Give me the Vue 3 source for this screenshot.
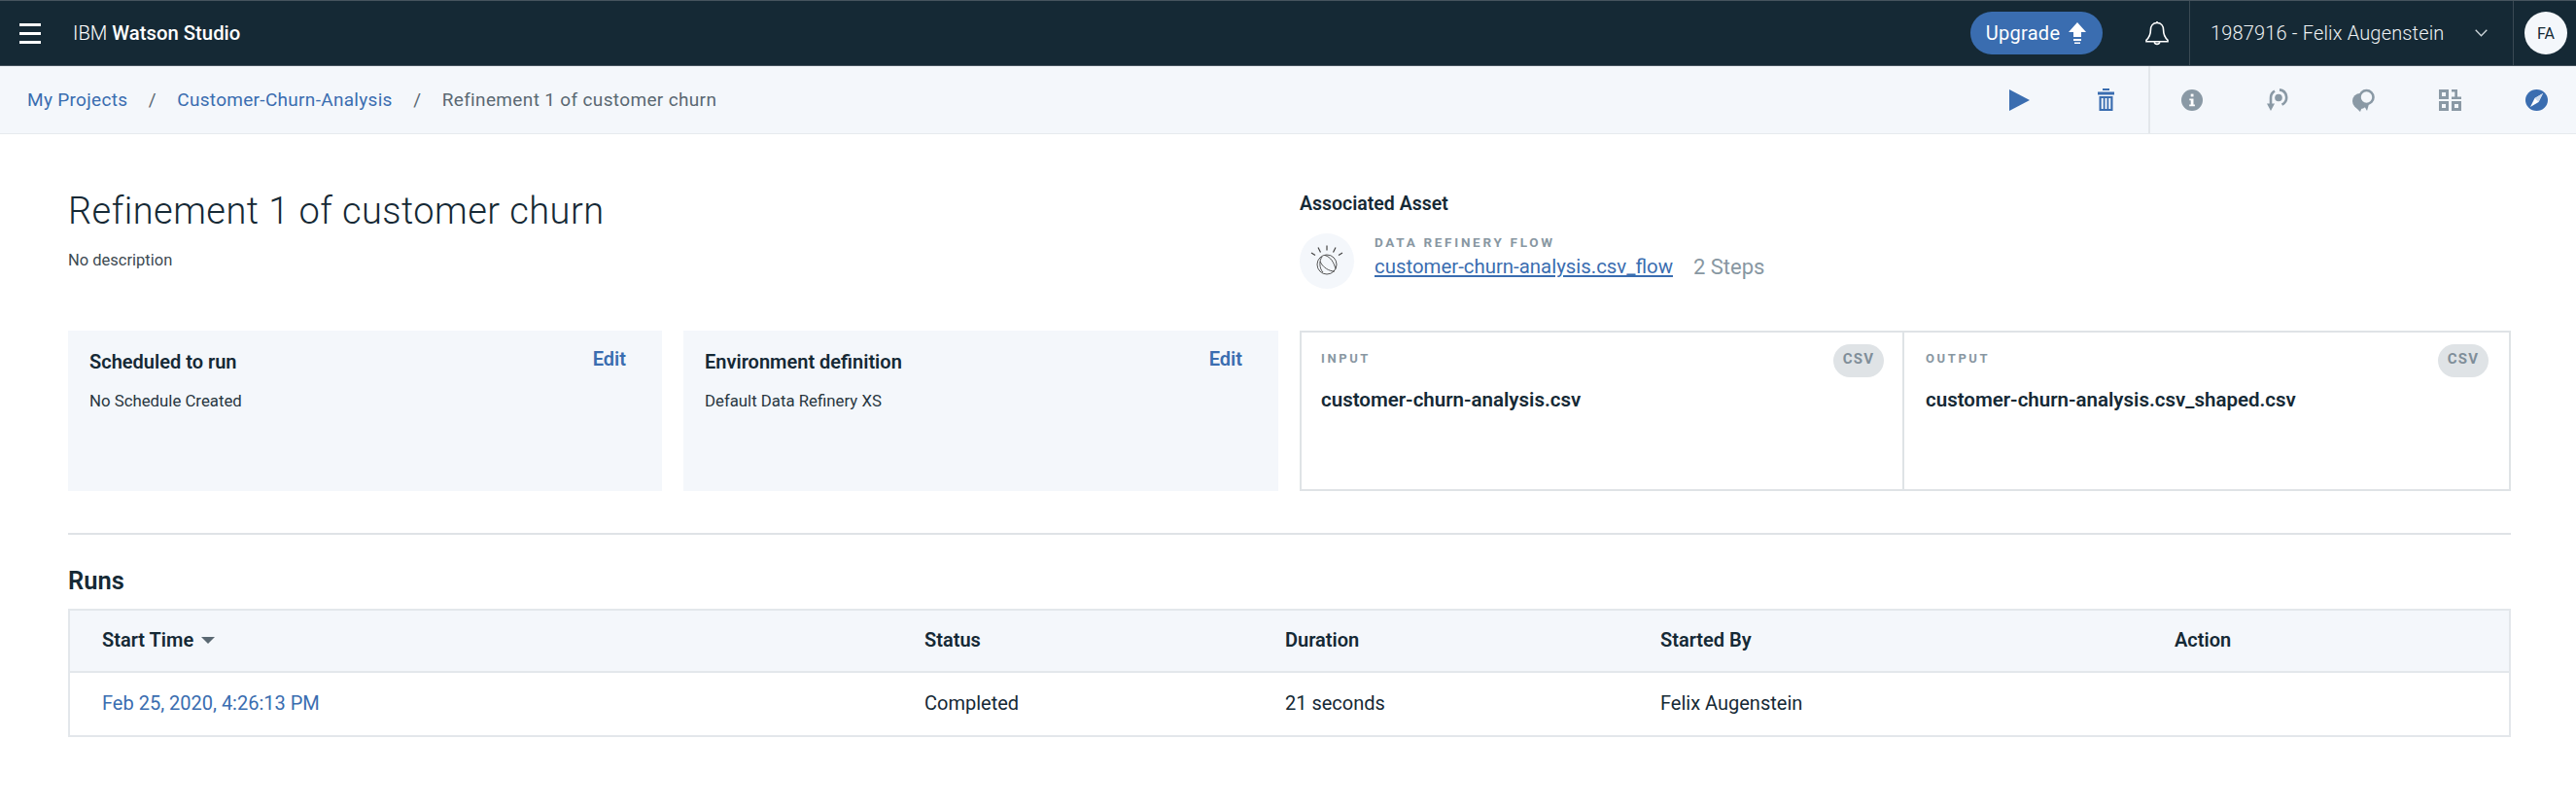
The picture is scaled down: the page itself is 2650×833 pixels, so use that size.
<script setup>
const crumbs = [
  { label: 'My Projects', link: true },
  { label: 'Customer-Churn-Analysis', link: true },
  { label: 'Refinement 1 of customer churn', link: false }
]
const cards = [
  { title: 'Scheduled to run', body: 'No Schedule Created' },
  { title: 'Environment definition', body: 'Default Data Refinery XS' }
]
const files = [
  { label: 'INPUT', name: 'customer-churn-analysis.csv' },
  { label: 'OUTPUT', name: 'customer-churn-analysis.csv_shaped.csv' }
]
const columns = ['Status', 'Duration', 'Started By', 'Action']
</script>

<template>
  <div class="page">
    <header class="topbar">
      <div class="menu"><span></span><span></span><span></span></div>
      <div class="brand">IBM <b>Watson Studio</b></div>
      <div class="top-right">
        <button class="upgrade">Upgrade
          <svg width="20" height="24" viewBox="0 0 20 24"><path d="M10 1 19 11H14V16H6V11H1Z" fill="#fff"/><rect x="6" y="18" width="8" height="2" fill="#fff"/><rect x="7" y="21.5" width="6" height="1.5" fill="#fff"/></svg>
        </button>
        <svg class="bell" width="26" height="27" viewBox="0 0 26 27" fill="none" stroke="#fff" stroke-width="1.6"><path d="M13 2.5c-4.4 0-6.6 3.4-6.6 7.4 0 4.8-1.2 7.2-4.4 10.3v1.6h22v-1.6c-3.2-3.1-4.4-5.5-4.4-10.3 0-4-2.2-7.4-6.6-7.4Z"/><path d="M10.2 22.2a2.9 2.9 0 0 0 5.6 0"/><path d="M13 1v1.5"/></svg>
        <div class="account">
          <span>1987916 - Felix Augenstein</span>
          <svg width="13" height="8" viewBox="0 0 13 8" fill="none" stroke="#cdd5da" stroke-width="1.3"><path d="M.7.8 6.5 6.8 12.3.8"/></svg>
        </div>
        <div class="avatar-wrap"><div class="avatar">FA</div></div>
      </div>
    </header>

    <nav class="subbar">
      <div class="crumbs">
        <template v-for="(c, i) in crumbs" :key="c.label">
          <span v-if="i" class="sep">/</span>
          <span :class="c.link ? 'crumb-link' : 'crumb-current'">{{ c.label }}</span>
        </template>
      </div>
      <div class="actions">
        <svg width="21" height="22" viewBox="0 0 21 22"><path d="M0 0 21 11 0 22Z" fill="#3a6db0"/></svg>
        <svg width="17" height="23" viewBox="0 0 17 23" fill="#3a6db0"><rect x="5" y="0" width="7" height="2"/><rect x="0" y="3.5" width="17" height="3"/><path d="M1.5 8h14v15h-14Zm2.2 2v11h2V10Zm3.8 0v11h2V10Zm3.8 0v11h2V10Z" fill-rule="evenodd"/></svg>
      </div>
      <div class="tools">
        <svg width="22" height="22" viewBox="0 0 22 22"><circle cx="11" cy="11" r="11" fill="#8a99a5"/><rect x="9.7" y="4.6" width="2.8" height="2.8" fill="#fff"/><path d="M8.3 9.4h4.2v6h1.4v1.8H8.2v-1.8h1.5v-4.2H8.3Z" fill="#fff"/></svg>
        <svg width="22" height="24" viewBox="0 0 22 24" fill="none"><path d="M13 1.4a8 8 0 0 1 2.5 15.2" stroke="#8a99a5" stroke-width="2.6"/><path d="M4 17V9.500A8 8 0 0 1 8 2.600" stroke="#8a99a5" stroke-width="2.6"/><circle cx="12" cy="9.5" r="3.8" fill="#8a99a5"/><path d="M0 15.5h8L4 23Z" fill="#8a99a5"/></svg>
        <svg width="23" height="24" viewBox="0 0 23 24"><circle cx="8" cy="13" r="8" fill="#8a99a5"/><path d="M3 19h7l-2 5ZM11 16l6 0-2 7Z" fill="#8a99a5"/><circle cx="14.5" cy="9" r="7" fill="#f4f7fb" stroke="#8a99a5" stroke-width="2.6"/></svg>
        <svg width="23" height="22" viewBox="0 0 23 22" fill="#8a99a5"><path d="M0 0h10v10H0Zm3 3v4h4V3Z" fill-rule="evenodd"/><path d="M13 0h6v7.5h4V10H13V7.5h3.3V2.500H13Z"/><path d="M0 12h10v10H0Zm3 3v4h4v-4Z" fill-rule="evenodd"/><path d="M13 12h10v10H13Zm3 3v4h4v-4Z" fill-rule="evenodd"/></svg>
        <svg width="23" height="22" viewBox="0 0 23 22"><ellipse cx="11.5" cy="11" rx="11.5" ry="11" fill="#3a6db0"/><path d="M18 4 13.5 13 5 18 9.5 9Z" fill="#fff"/><path d="M18 4 9.5 9 13.500 13Z" fill="#cfdcee"/></svg>
      </div>
    </nav>

    <main class="main">
      <section class="hero">
        <div class="hero-left">
          <h1>Refinement 1 of customer churn</h1>
          <p>No description</p>
        </div>
        <div class="hero-right">
          <h3>Associated Asset</h3>
          <div class="asset">
            <div class="asset-icon">
              <svg width="36" height="36" viewBox="0 0 36 36" fill="none" stroke="#444" stroke-width=".9"><circle cx="18" cy="21" r="10"/><path d="M13 13c-3 4-3 12 1 16M11 18c3 6 9 10 15 10M16 11.5c6 2 9 7 11 14"/><path d="M18 1.5v5M9 3.5l2.5 5M27 3.5l-2.5 5M2 9l4 2.5M34 9l-4 2.5" stroke-width="1.2"/></svg>
            </div>
            <div class="asset-text">
              <div class="asset-label">DATA REFINERY FLOW</div>
              <div class="asset-line"><a>customer-churn-analysis.csv_flow</a><span>2 Steps</span></div>
            </div>
          </div>
        </div>
      </section>

      <section class="summary">
        <div v-for="c in cards" :key="c.title" class="card">
          <div class="card-head"><h4>{{ c.title }}</h4><a>Edit</a></div>
          <p>{{ c.body }}</p>
        </div>
        <div class="files">
          <div v-for="f in files" :key="f.label" class="file">
            <div class="file-head"><span class="file-label">{{ f.label }}</span><span class="badge">CSV</span></div>
            <div class="file-name">{{ f.name }}</div>
          </div>
        </div>
      </section>

      <hr class="rule" />

      <h2 class="runs-title">Runs</h2>
      <div class="table">
        <div class="row head">
          <div class="sort">Start Time <i class="caret"></i></div>
          <div v-for="c in columns" :key="c">{{ c }}</div>
        </div>
        <div class="row body">
          <a>Feb 25, 2020, 4:26:13 PM</a>
          <div>Completed</div>
          <div>21 seconds</div>
          <div>Felix Augenstein</div>
          <div></div>
        </div>
      </div>
    </main>
  </div>
</template>

<style>
html, body { background: #fff; }
</style>

<style scoped>
.page { width: 2650px; min-height: 833px; background: #fff; color: #152935; font-family: Roboto, "Noto Sans", sans-serif; overflow: hidden; }
h1, h2, h3, h4, p { margin: 0; }

.topbar { height: 68px; box-sizing: border-box; background: #152935; border-top: 1px solid #46545e; border-bottom: 1px solid #46545e; display: flex; align-items: center; color: #fff; }
.menu { width: 22px; margin-left: 20px; display: flex; flex-direction: column; gap: 6px; }
.menu span { height: 3px; background: #fff; }
.brand { margin-left: 33px; font-size: 20.3px; font-weight: 300; }
.brand b { font-weight: 500; }
.top-right { margin-left: auto; display: flex; align-items: center; height: 100%; }
.upgrade { width: 136px; height: 44px; margin-right: 1px; border: 0; border-radius: 22px; background: #3a6db0; color: #fff; font: 400 20px Roboto, sans-serif; letter-spacing: .3px; display: flex; align-items: center; justify-content: center; gap: 8px; padding: 0; }
.bell { margin-left: 42px; }
.account { margin-left: 20px; height: 100%; width: 334px; box-sizing: border-box; padding-left: 21px; border-left: 1px solid #3a4a54; border-right: 1px solid #3a4a54; display: flex; align-items: center; font-size: 20px; font-weight: 300; letter-spacing: .16px; color: #eef1f3; }
.account svg { margin-left: 31px; }
.avatar-wrap { width: 64px; display: flex; padding-left: 11px; box-sizing: border-box; }
.avatar { width: 44px; height: 44px; border-radius: 50%; background: #f4f7fb; color: #152935; font-size: 16px; display: flex; align-items: center; justify-content: center; }

.subbar { height: 70px; box-sizing: border-box; background: #f4f7fb; border-bottom: 1px solid #e6eaee; display: flex; align-items: center; font-size: 19px; }
.crumbs { margin-left: 28px; display: flex; align-items: center; }
.crumb-link { color: #3a6db0; letter-spacing: .3px; }
.crumb-current { color: #5a6872; letter-spacing: .35px; }
.sep { width: 51px; text-align: center; color: #5a6872; }
.actions { margin-left: auto; width: 143px; height: 100%; display: flex; align-items: center; gap: 70px; }
.tools { height: 100%; width: 440px; box-sizing: border-box; border-left: 2px solid #e3e7eb; display: flex; align-items: center; padding-left: 32px; gap: 66px; }

.main { padding: 0 67px 0 70px; }
.hero { height: 202px; display: flex; }
.hero-left { width: 1267px; padding-top: 57px; box-sizing: border-box; }
h1 { font-size: 38px; line-height: 44px; font-weight: 300; letter-spacing: .45px; }
.hero-left p { margin-top: 18px; font-size: 16.5px; line-height: 22px; color: #3d4a52; }
.hero-right { padding-top: 60px; }
h3 { font-size: 19.5px; line-height: 24px; font-weight: 600; }
.asset { display: flex; margin-top: 18px; align-items: center; }
.asset-icon { width: 56px; height: 57px; border-radius: 50%; background: #f4f7fb; display: flex; align-items: center; justify-content: center; }
.asset-text { margin-left: 21px; margin-top: -6px; }
.asset-label { font-size: 13.5px; line-height: 16px; font-weight: 700; letter-spacing: 2.7px; color: #8897a2; }
.asset-line { display: flex; align-items: center; margin-top: 1px; }
.asset-line a { font-size: 20.4px; line-height: 32px; color: #3a6db0; text-decoration: underline; }
.asset-line span { margin-left: 21px; font-size: 22px; color: #8897a2; }

.summary { display: grid; grid-template-columns: 611px 612px 1246px; gap: 22px; height: 165px; }
.card { background: #f4f7fb; padding: 20px 37px 0 22px; }
.card-head { display: flex; justify-content: space-between; align-items: flex-start; }
h4 { font-size: 20px; line-height: 24px; font-weight: 600; }
.card a { color: #3a6db0; font-size: 20px; font-weight: 600; line-height: 20px; margin-top: -1px; }
.card p { font-size: 16.8px; line-height: 22px; margin-top: 17px; color: #28363f; }
.files { display: flex; }
.file { width: 622px; box-sizing: border-box; border: 2px solid #dfe3e6; padding: 12px 20px 0 20px; }
.file + .file { width: 624px; border-left: 0; padding-left: 22px; padding-right: 22px; }
.file-head { display: flex; justify-content: space-between; align-items: flex-start; }
.file-label { font-size: 13px; line-height: 30px; font-weight: 700; letter-spacing: 2.6px; color: #8897a2; }
.badge { width: 52px; height: 34px; padding-bottom: 4px; box-sizing: border-box; border-radius: 17px; background: #dfe3e6; color: #7f8e99; font-size: 15px; font-weight: 700; letter-spacing: 1.2px; display: flex; align-items: center; justify-content: center; margin-right: -1px; }
.file-name { margin-top: 11px; font-size: 20.5px; line-height: 24px; font-weight: 600; }

.rule { margin: 43px 0 0; border: 0; border-top: 2px solid #dfe3e6; }
.runs-title { margin-top: 33px; font-size: 25.5px; line-height: 28px; font-weight: 600; }
.table { margin-top: 15px; border: 2px solid #e3e7eb; }
.row { display: grid; grid-template-columns: 846px 371px 386px 529px 1fr; padding-left: 33px; align-items: center; font-size: 20px; }
.head { height: 64px; padding-bottom: 3px; box-sizing: border-box; background: #f4f7fb; border-bottom: 2px solid #e3e7eb; font-weight: 600; }
.body { height: 64px; padding-bottom: 2px; box-sizing: border-box; }
.body a { color: #3a6db0; }
.sort { display: flex; align-items: center; gap: 8px; }
.caret { width: 0; height: 0; border-left: 7px solid transparent; border-right: 7px solid transparent; border-top: 7px solid #5a6872; margin-top: 2px; }
</style>
